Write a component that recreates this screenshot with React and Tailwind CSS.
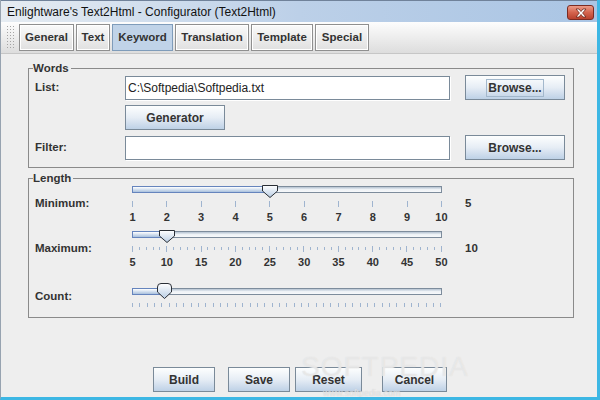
import React from 'react';

const TABS = [
  { label: 'General', w: 'w-[55px]' },
  { label: 'Text', w: 'w-[34px]' },
  { label: 'Keyword', w: 'w-[61px]', active: true },
  { label: 'Translation', w: 'w-[74px]' },
  { label: 'Template', w: 'w-[62px]' },
  { label: 'Special', w: 'w-[54px]' },
];

function Button({ children, className = '', focus }) {
  return (
    <div
      className={`h-[25px] flex items-center justify-center border border-[#7a8a99] bg-gradient-to-b from-[#fdfefe] via-[#e6edf5] to-[#bed1e6] text-[12px] font-bold text-[#333] ${className}`}
    >
      {focus ? <span className="px-px leading-[16px] border border-[#a3b8cc]">{children}</span> : children}
    </div>
  );
}

function Field({ value }) {
  return (
    <div className="h-[24px] bg-white border border-[#7a8a99] shadow-[1px_1px_0_#ffffff] flex items-center pl-[2px] text-[12px] text-[#222]">
      {value}
    </div>
  );
}

function Thumb({ id, round }) {
  if (round) {
    return (
      <svg width="15" height="16" viewBox="0 0 15 16">
        <defs>
          <linearGradient id={id} x1="0" y1="0" x2="0" y2="1">
            <stop offset="0" stopColor="#ffffff" />
            <stop offset="1" stopColor="#b9cde4" />
          </linearGradient>
        </defs>
        <path d="M0.5 4Q0.5 0.5 4 0.5H11Q14.5 0.5 14.5 4V9L7.5 15.5L0.5 9Z" fill={`url(#${id})`} stroke="#2a2f36" />
      </svg>
    );
  }
  return (
    <svg width="16" height="13" viewBox="0 0 16 13">
      <defs>
        <linearGradient id={id} x1="0" y1="0" x2="0" y2="1">
          <stop offset="0" stopColor="#ffffff" />
          <stop offset="1" stopColor="#b9cde4" />
        </linearGradient>
      </defs>
      <path d="M0.5 0.5H15.5V6L8 12.5L0.5 6Z" fill={`url(#${id})`} stroke="#2a2f36" />
    </svg>
  );
}

// frac = thumb position 0..1, ticks = number of intervals
function Slider({ id, frac, ticks, majorEvery, labels, round }) {
  const pos = Math.round(frac * 309);
  const items = Array.from({ length: ticks + 1 }, (_, i) => i);
  return (
    <div className="w-[310px]">
      <div className={round ? 'relative h-[16px] pt-[5px]' : 'relative h-[13px] pt-px'}>
        <div className="flex h-[7px]">
          <div
            className="h-full border border-[#6584bd] bg-gradient-to-b from-[#ffffff] to-[#a9c1de]"
            style={{ width: pos + 1 }}
          />
          <div className="flex-1 h-full border border-l-0 border-[#7d8c9c] bg-gradient-to-b from-[#b4c2d1] via-[#eef2f6] to-[#f7f9fb]" />
        </div>
        <div className="absolute top-0" style={{ left: pos - 7 }}>
          <Thumb id={id} round={round} />
        </div>
      </div>
      <div className={round ? 'flex justify-between items-start h-[4px] mt-[4px]' : 'flex justify-between items-start h-[6px] mt-[3px]'}>
        {items.map((i) => (
          <div
            key={i}
            className={`w-px bg-[#9fb4cf] ${
              round ? 'h-[4px]' : i % majorEvery === 0 ? 'h-[6px]' : 'h-[3px] mt-px'
            }`}
          />
        ))}
      </div>
      {labels && (
        <div className="flex justify-between mt-[4px] h-[12px]">
          {labels.map((l) => (
            <div key={l} className="w-px flex justify-center">
              <span className="whitespace-nowrap text-[11px] leading-[12px] font-bold text-[#333]">{l}</span>
            </div>
          ))}
        </div>
      )}
    </div>
  );
}

export default function App() {
  return (
    <div className="w-[600px] h-[400px] relative overflow-hidden flex flex-col bg-[#eeeeee] border-l border-l-[#97a3b0] border-r-[3px] border-r-[#3db7e4] border-b-[3px] border-b-[#3db7e4] font-['Liberation_Sans',Arial,sans-serif] text-[#333]">
      {/* Title bar */}
      <div className="h-[22px] shrink-0 flex items-center pl-[6px] pr-[3px] border-t border-[#70829a] bg-gradient-to-r from-[#e6ecf2] via-[#bcd0e8] to-[#aac5e4]">
        <span className="text-[12px] text-[#111]">Enlightware's Text2Html - Configurator (Text2Html)</span>
        <div className="ml-auto w-[27px] h-[15px] mt-[2px] rounded-[3px] border border-[#7b2b22] bg-gradient-to-b from-[#eb9a87] via-[#d4644e] to-[#b9412d] flex items-center justify-center">
          <svg width="12" height="10" viewBox="0 0 12 10">
            <path
              d="M1 1H4L6 3.5L8 1H11L7.6 5L11 9H8L6 6.5L4 9H1L4.4 5Z"
              fill="#ffffff"
              stroke="#6b2418"
              strokeWidth="0.8"
              strokeLinejoin="round"
            />
          </svg>
        </div>
      </div>

      {/* Toolbar */}
      <div className="h-[32px] shrink-0 flex items-start pt-[2px] pl-[5px] border-b border-[#c6c6c6] bg-gradient-to-b from-[#fdfdfd] to-[#dddddd]">
        <div className="w-[8px] h-[25px] mt-px bg-[radial-gradient(#a4a4a4_0.8px,transparent_0.9px)] bg-[length:3px_3px]" />
        <div className="flex gap-[2px] ml-[5px]">
          {TABS.map((t) => (
            <div
              key={t.label}
              className={`${t.w} h-[27px] flex items-center justify-center text-[11.5px] font-bold border ${
                t.active
                  ? 'bg-[#c0d3e8] border-[#7f9cba] text-[#333]'
                  : 'border-[#8f8f8f] shadow-[inset_1px_1px_0_#ffffff,inset_-1px_-1px_0_#ffffff] text-[#333]'
              }`}
            >
              {t.label}
            </div>
          ))}
        </div>
      </div>

      {/* Words */}
      <fieldset className="ml-[27px] w-[546px] mt-[7px] border border-[#8a8a8a] pb-[7px]">
        <legend className="ml-[4px] pr-[2px] text-[11.5px] leading-[14px] font-bold text-[#333]">Words</legend>
        <div className="grid grid-cols-[75px_325px_100px] gap-x-[15px] gap-y-[5px] pl-[6px] items-center">
          <span className="text-[11.5px] font-bold">List:</span>
          <Field value="C:\Softpedia\Softpedia.txt" />
          <Button focus>Browse...</Button>

          <span />
          <Button className="w-[100px]">Generator</Button>
          <span />

          <span className="text-[11.5px] font-bold">Filter:</span>
          <Field value="" />
          <Button>Browse...</Button>
        </div>
      </fieldset>

      {/* Length */}
      <fieldset className="ml-[27px] w-[546px] mt-[3px] border border-[#8a8a8a] pb-[10px]">
        <legend className="ml-[4px] pr-[2px] text-[11.5px] leading-[14px] font-bold text-[#333]">Length</legend>

        <div className="flex items-start">
          <span className="w-[103px] pl-[6px] mt-[11px] text-[11.5px] leading-[14px] font-bold">Minimum:</span>
          <Slider id="gMin" frac={4 / 9} ticks={9} majorEvery={1} labels={['1', '2', '3', '4', '5', '6', '7', '8', '9', '10']} />
          <span className="ml-[23px] mt-[11px] text-[11.5px] leading-[14px] font-bold">5</span>
        </div>

        <div className="flex items-start mt-[7px]">
          <span className="w-[103px] pl-[6px] mt-[11px] text-[11.5px] leading-[14px] font-bold">Maximum:</span>
          <Slider id="gMax" frac={5 / 45} ticks={45} majorEvery={5} labels={['5', '10', '15', '20', '25', '30', '35', '40', '45', '50']} />
          <span className="ml-[23px] mt-[11px] text-[11.5px] leading-[14px] font-bold">10</span>
        </div>

        <div className="flex items-start mt-[15px]">
          <span className="w-[103px] pl-[6px] mt-[6px] text-[11.5px] leading-[14px] font-bold">Count:</span>
          <Slider id="gCount" frac={0.104} ticks={42} majorEvery={1} round />
        </div>
      </fieldset>

      <div className="flex-1" />

      {/* Bottom buttons */}
      <div className="flex mb-[5px] ml-[152px]">
        <Button className="w-[62px]">Build</Button>
        <Button className="w-[62px] ml-[13px]">Save</Button>
        <Button className="w-[67px] ml-[5px]">Reset</Button>
        <Button className="w-[65px] ml-[20px]">Cancel</Button>
      </div>

      {/* watermark */}
      <div className="absolute left-[300px] top-[352px] pointer-events-none text-[28px] leading-[30px] tracking-[1px] text-white/40 [text-shadow:0_0_1px_#d8d8d8]">
        SOFTPEDIA
      </div>
      <div className="absolute left-[322px] top-[389px] pointer-events-none text-[9px] leading-[9px] text-white/50 [text-shadow:0_0_1px_#c0c0c0]">
        www.softpedia.com
      </div>
    </div>
  );
}
